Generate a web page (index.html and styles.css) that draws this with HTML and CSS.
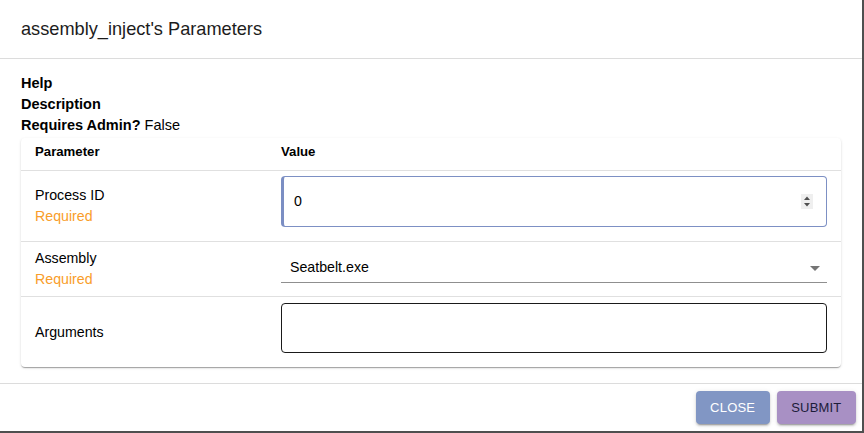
FILE: index.html
```html
<!DOCTYPE html>
<html>
<head>
<meta charset="utf-8">
<link rel="stylesheet" href="styles.css">
</head>
<body>
<div class="dialog">
  <div class="dialog-title">assembly_inject's Parameters</div>
  <div class="dialog-content">
    <div class="meta"><b>Help</b></div>
    <div class="meta"><b>Description</b></div>
    <div class="meta"><b>Requires Admin?</b> False</div>
    <div class="card">
      <div class="row head">
        <div class="cell name">Parameter</div>
        <div class="cell value">Value</div>
      </div>
      <div class="row r1">
        <div class="cell name"><div>Process ID</div><div class="req">Required</div></div>
        <div class="cell value">
          <div class="numfield">
            <span class="numtext">0</span>
            <span class="spin">
              <svg width="6" height="11" viewBox="0 0 6 11"><path d="M0 4 L3 0.5 L6 4 Z M0 7 L3 10.5 L6 7 Z" fill="#505050"/></svg>
            </span>
          </div>
        </div>
      </div>
      <div class="row r2">
        <div class="cell name"><div>Assembly</div><div class="req">Required</div></div>
        <div class="cell value">
          <div class="select">
            <span>Seatbelt.exe</span>
            <svg width="10" height="5" viewBox="0 0 10 5"><path d="M0 0 L10 0 L5 5 Z" fill="#757575"/></svg>
          </div>
        </div>
      </div>
      <div class="row r3">
        <div class="cell name"><div>Arguments</div></div>
        <div class="cell value">
          <div class="textarea"></div>
        </div>
      </div>
    </div>
  </div>
  <div class="dialog-actions">
    <button class="btn close">CLOSE</button>
    <button class="btn submit">SUBMIT</button>
  </div>
</div>
</body>
</html>
```

FILE: styles.css
```css
html, body {
  margin: 0;
  padding: 0;
}
body {
  background: #4f4f4f;
  width: 864px;
  height: 433px;
  overflow: hidden;
  font-family: "Liberation Sans", Arial, sans-serif;
  color: #000;
}
.dialog {
  width: 862px;
  height: 431px;
  background: #fff;
  display: flex;
  flex-direction: column;
}
.dialog-title {
  height: 58px;
  line-height: 58px;
  padding: 0 21px;
  font-size: 18.2px;
  color: #1c1c1c;
  border-bottom: 1px solid #dcdcdc;
}
.dialog-content {
  flex: 1;
  padding: 14px 21px 16px;
  box-sizing: border-box;
  border-bottom: 1px solid #dcdcdc;
}
.meta {
  font-size: 14.5px;
  line-height: 21px;
}
.meta b {
  font-weight: bold;
}
.card {
  margin-top: 2px;
  background: #fff;
  border-radius: 4px;
  box-shadow: 0 2px 1px -1px rgba(0,0,0,0.2), 0 1px 1px 0 rgba(0,0,0,0.14), 0 1px 3px 0 rgba(0,0,0,0.12);
}
.row {
  display: grid;
  grid-template-columns: 246px 1fr;
  border-bottom: 1px solid #e0e0e0;
}
.row.r3 {
  border-bottom: none;
}
.cell {
  padding: 0 14px;
  font-size: 14.2px;
  line-height: 21px;
}
.cell.name {
  display: flex;
  flex-direction: column;
  justify-content: center;
}
.head {
  height: 32px;
  box-sizing: content-box;
}
.head .cell {
  font-size: 13.2px;
  font-weight: bold;
  line-height: 18px;
  padding-top: 5px;
  justify-content: flex-start;
  display: block;
}
.req {
  color: #f99d2a;
}
.r1 { height: 70px; }
.r2 { height: 54px; }
.r3 { height: 70px; }
.r1 .value { padding-top: 5px; }
.r2 .value { padding-top: 5px; }
.r3 .value { padding-top: 6px; }
.numfield {
  height: 51px;
  box-sizing: border-box;
  border: 1px solid #7d90c4;
  border-left: 3px solid #7b8ec3;
  border-radius: 4px;
  display: flex;
  align-items: center;
  justify-content: space-between;
  padding: 0 13px 0 10px;
  font-size: 14.2px;
}
.numtext {
  line-height: 21px;
}
.spin {
  width: 12px;
  height: 15px;
  background: #efefef;
  display: flex;
  align-items: center;
  justify-content: center;
}
.spin svg { display: block; }
.select {
  height: 36px;
  box-sizing: border-box;
  border-bottom: 1px solid #8f8f8f;
  padding: 10px 7px 4px 9px;
  display: flex;
  align-items: center;
  justify-content: space-between;
  font-size: 14.2px;
  line-height: 21px;
}
.select svg { display: block; margin-top: 2px; }
.textarea {
  height: 50px;
  box-sizing: border-box;
  border: 1px solid #1a1a1a;
  border-radius: 4px;
}
.dialog-actions {
  height: 47px;
  box-sizing: border-box;
  padding: 7px 6px 7px 7px;
  display: flex;
  justify-content: flex-end;
  gap: 7px;
}
.btn {
  height: 33px;
  border: none;
  border-radius: 4px;
  padding: 0 14.5px;
  font-family: "Liberation Sans", Arial, sans-serif;
  font-size: 13px;
  letter-spacing: 0.2px;
  box-shadow: 0 3px 1px -2px rgba(0,0,0,0.2), 0 2px 2px 0 rgba(0,0,0,0.14), 0 1px 5px 0 rgba(0,0,0,0.12);
}
.btn.close {
  background: #8196c4;
  color: #fff;
}
.btn.submit {
  background: #a890c4;
  color: #1c1c3a;
}
```
